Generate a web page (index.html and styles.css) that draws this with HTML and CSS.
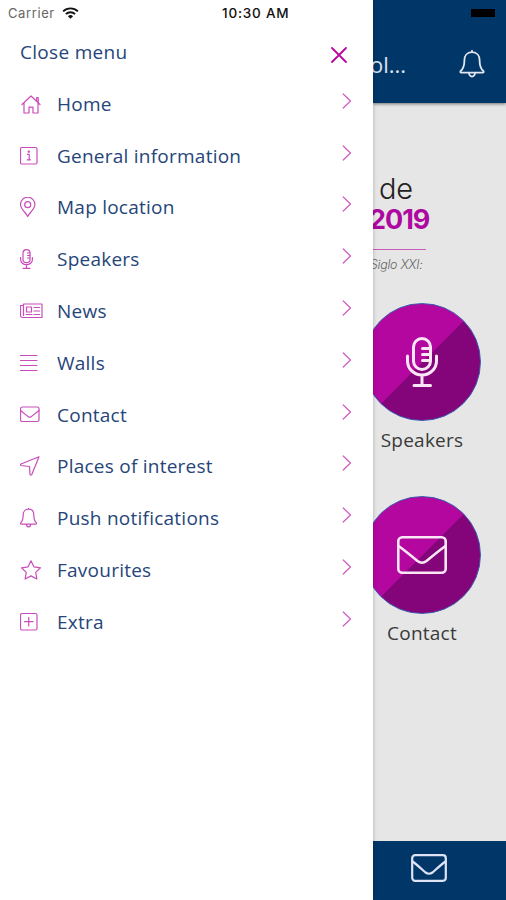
FILE: index.html
```html
<!DOCTYPE html>
<html lang="en">
<head>
  <meta charset="UTF-8" />
  <title>Menu</title>
  <link rel="stylesheet" href="styles.css">
</head>
<body>
  <div class="status-bar">
    <span class="carrier">Carrier</span>
    <svg class="wifi" viewBox="0 0 18 13"><path d="M1 4.8a11.5 11.5 0 0 1 16 0M4 7.8a7 7 0 0 1 10 0" /><path class="solid" d="M6.2 10a4 4 0 0 1 5.6 0L9 12.8z" /></svg>
    <span class="clock">10:30 AM</span>
    <span class="battery"></span>
  </div>

  <nav class="menu">
    <div class="menu-header">
      <span class="menu-title">Close menu</span>
      <svg class="close" viewBox="0 0 16 16"><path d="M1 1l14 14M15 1L1 15" /></svg>
    </div>
    <ul class="menu-list">
      <li class="item">
        <svg class="icon" viewBox="0 0 24 20"><path d="M2 10.500L11 2l9 8.500M4 9v10h5v-5.800h4V19h5V9M16.700 6.500V3.500h1.500v5" /></svg>
        <span class="label">Home</span>
        <svg class="arrow" viewBox="0 0 10 16"><path d="M1.2 1l7.3 7-7.3 7" /></svg>
      </li>
      <li class="item">
        <svg class="icon" viewBox="0 0 24 20"><rect x="0.5" y="1.5" width="16.5" height="16.5" rx="1.5" /><path d="M7.5 8.300h1.700v5.500M7.300 13.800h3.200M8.300 5h1v1.200h-1z" /></svg>
        <span class="label">General information</span>
        <svg class="arrow" viewBox="0 0 10 16"><path d="M1.2 1l7.3 7-7.3 7" /></svg>
      </li>
      <li class="item">
        <svg class="icon" viewBox="0 0 24 20"><path d="M7.7 19.4C6.3 16.2.5 12 .5 7.4a7.2 7.2 0 0 1 14.4 0c0 4.6-5.8 8.8-7.2 12z" /><circle cx="7.7" cy="7.7" r="3" /></svg>
        <span class="label">Map location</span>
        <svg class="arrow" viewBox="0 0 10 16"><path d="M1.2 1l7.3 7-7.3 7" /></svg>
      </li>
      <li class="item">
        <svg class="icon" viewBox="0 0 24 20"><rect x="3" y="0.7" width="7" height="13" rx="3.5" /><path d="M.6 8.500v2a5.900 5.200 0 0 0 11.800 0v-2M6.500 15.800v3.500M3 19.300h7M10 4H7.500M10 6.500H7.500M10 9H7.500" /></svg>
        <span class="label">Speakers</span>
        <svg class="arrow" viewBox="0 0 10 16"><path d="M1.2 1l7.3 7-7.3 7" /></svg>
      </li>
      <li class="item">
        <svg class="icon" viewBox="0 0 24 20"><path d="M3.500 3h18.500v13.500H2.500a2 2 0 0 1-2-2v-10h3M3.500 3v11.500M6.500 6h5v5h-5zM6 13.500h6M14 6.500h5.500M14 10h5.500M14 13.500h5.500" /></svg>
        <span class="label">News</span>
        <svg class="arrow" viewBox="0 0 10 16"><path d="M1.2 1l7.3 7-7.3 7" /></svg>
      </li>
      <li class="item">
        <svg class="icon" viewBox="0 0 24 20"><path d="M0 2.500h17M0 7.500h17M0 12.500h17M0 17.500h17" /></svg>
        <span class="label">Walls</span>
        <svg class="arrow" viewBox="0 0 10 16"><path d="M1.2 1l7.3 7-7.3 7" /></svg>
      </li>
      <li class="item">
        <svg class="icon" viewBox="0 0 24 20"><rect x="0.5" y="2" width="18.5" height="14.5" rx="1.8" /><path d="M.5 5.500c3 2.500 5 4 7.500 6q1.700 1.400 3.500 0c2.500-2 4.500-3.500 7.500-6" /></svg>
        <span class="label">Contact</span>
        <svg class="arrow" viewBox="0 0 10 16"><path d="M1.2 1l7.3 7-7.3 7" /></svg>
      </li>
      <li class="item">
        <svg class="icon" viewBox="0 0 24 20"><path d="M19 .8L11.800 18.500q-.8 1.400-1.800 0L9.500 10.500 1 9.500q-1-1 0-1.500z" /></svg>
        <span class="label">Places of interest</span>
        <svg class="arrow" viewBox="0 0 10 16"><path d="M1.2 1l7.3 7-7.3 7" /></svg>
      </li>
      <li class="item">
        <svg class="icon" viewBox="0 0 24 20"><path d="M8.500 1.200c-3.500 0-5.300 2.500-5.300 5.500 0 5-.9 6.500-2.400 8-.6.900-.2 1.500.5 1.500h14.400c.7 0 1.100-.6.500-1.500-1.500-1.500-2.400-3-2.400-8 0-3-1.800-5.500-5.300-5.500zM8.500 1.200V.5M6.500 16.500a2 2.300 0 0 0 4 0" /></svg>
        <span class="label">Push notifications</span>
        <svg class="arrow" viewBox="0 0 10 16"><path d="M1.2 1l7.3 7-7.3 7" /></svg>
      </li>
      <li class="item">
        <svg class="icon" viewBox="0 0 24 20"><path d="M11 .8l2.900 6 6.600 1-4.800 4.600 1.200 6.600-5.900-3.100L5.100 19l1.200-6.600L1.500 7.800l6.600-1z" /></svg>
        <span class="label">Favourites</span>
        <svg class="arrow" viewBox="0 0 10 16"><path d="M1.2 1l7.3 7-7.3 7" /></svg>
      </li>
      <li class="item">
        <svg class="icon" viewBox="0 0 24 20"><rect x="0.5" y="1.5" width="16.5" height="16.5" rx="1.5" /><path d="M4.500 9.700h8.500M8.750 5.500V14" /></svg>
        <span class="label">Extra</span>
        <svg class="arrow" viewBox="0 0 10 16"><path d="M1.2 1l7.3 7-7.3 7" /></svg>
      </li>
    </ul>
  </nav>

  <main class="page">
    <header class="page-header">
      <span class="page-title">ol...</span>
      <svg class="bell" viewBox="0 0 26 28"><path d="M13 2.200c-5 0-7.600 3.600-7.600 8 0 6.500-1.200 8.600-3.600 10.600-.9 1-.5 1.800.6 1.800h21.200c1.100 0 1.500-.8.600-1.800-2.400-2-3.600-4.100-3.600-10.600 0-4.400-2.600-8-7.600-8zM13 2.200V.8M10 22.800a3 3.700 0 0 0 6 0" /></svg>
    </header>
    <section class="content">
      <div class="banner">
        <div class="banner-top">de</div>
        <div class="banner-year">2019</div>
        <div class="banner-sub">Siglo XXI:</div>
      </div>
      <div class="tile">
        <div class="circle">
          <svg class="mic" viewBox="0 0 32 50"><rect x="7.5" y="1.5" width="17" height="31" rx="8.5" /><path d="M1.500 19v5a14.500 14 0 0 0 29 0v-5M16 38v10M8 48.500h16.500M24 11.500h-7.500M24 17.500h-7.500M24 23.500h-7.500" /></svg>
        </div>
        <div class="tile-label">Speakers</div>
      </div>
      <div class="tile">
        <div class="circle">
          <svg class="mail" viewBox="0 0 50 38"><rect x="1.3" y="1.3" width="47.4" height="35.4" rx="4" /><path d="M1.500 10c7 5 13 10 19 15q4.500 3.500 9 0c6-5 12-10 19-15" /></svg>
        </div>
        <div class="tile-label">Contact</div>
      </div>
    </section>
    <footer class="tab-bar">
      <svg class="tab-mail" viewBox="0 0 36 28"><rect x="1.2" y="1.2" width="33.6" height="25.6" rx="3" /><path d="M1.500 7.500c5 3.700 9 7.500 13 11q3.500 2.500 7 0c4-3.500 8-7.300 13-11" /></svg>
    </footer>
  </main>
</body>
</html>
```

FILE: styles.css
```css
* {
  box-sizing: border-box;
}

body {
  margin: 0;
  height: 900px;
  display: flex;
  overflow: hidden;
  background: #fff;
  font-family: 'Open Sans', sans-serif;
}

svg {
  flex: none;
  fill: none;
  stroke-linecap: round;
  stroke-linejoin: round;
}

/* lies over both the menu and the page */
.status-bar {
  position: absolute;
  top: 0;
  left: 0;
  width: 506px;
  height: 26px;
  padding: 0 11px 0 8px;
  display: grid;
  grid-template-columns: 54px 160px 1fr 24px;
  align-items: center;
  font-family: Inter, sans-serif;
  font-size: 13px;
  z-index: 3;
}

.carrier {
  color: #666;
  letter-spacing: 0.6px;
}

.wifi {
  width: 17px;
  height: 12px;
  stroke: #111;
  stroke-width: 2;
  stroke-linecap: butt;
}

.wifi .solid {
  fill: #111;
  stroke: none;
}

.clock {
  color: #111;
  font-size: 13.5px;
  font-weight: 500;
  letter-spacing: 0.8px;
  white-space: nowrap;
}

.battery {
  height: 8px;
  background: #000;
}

.menu {
  width: 373px;
  padding-top: 26px;
  background: #fff;
  color: #264579;
  font-size: 19px;
  letter-spacing: 0.24px;
  box-shadow: 0 0 4px rgba(0, 0, 0, 0.25);
  z-index: 2;
}

.menu-header {
  height: 52px;
  padding: 0 26px 0 20px;
  display: flex;
  justify-content: space-between;
  align-items: center;
}

.menu-title {
  margin-bottom: 1px;
  letter-spacing: 0.3px;
}

.close {
  width: 16px;
  height: 16px;
  margin-top: 5px;
  stroke: #b9089f;
  stroke-width: 1.8;
}

.menu-list {
  margin: 0;
  padding: 0;
  list-style: none;
}

.item {
  height: 51.8px;
  padding: 0 21px 0 20px;
  display: flex;
  align-items: center;
}

.icon {
  width: 24px;
  height: 20px;
  margin-right: 13px;
  stroke: #c94dba;
  stroke-width: 1.2;
}

.label {
  flex: 1;
}

.arrow {
  width: 10px;
  height: 16px;
  margin-bottom: 6px;
  stroke: #cf5bc2;
  stroke-width: 1.2;
}

.page {
  width: 133px;
  display: flex;
  flex-direction: column;
  overflow: hidden;
  background: #e6e6e6;
}

.page-header {
  height: 103px;
  padding: 25px 21px 0 0;
  display: flex;
  justify-content: space-between;
  align-items: center;
  background: #003768;
  box-shadow: 0 1px 3px rgba(0, 0, 0, 0.5);
  color: #dfe3f0;
}

.page-title {
  margin-left: -3px;
  font-size: 22px;
}

.bell {
  width: 26px;
  height: 28px;
  stroke: #e4e6f2;
  stroke-width: 1.8;
}

.content {
  flex: 1;
}

.banner {
  height: 200px;
  padding-top: 70px;
  font-family: Inter, sans-serif;
}

.banner-top {
  margin-left: 6px;
  font-size: 29px;
  font-weight: 300;
  line-height: 32px;
  letter-spacing: -0.3px;
  color: #222;
}

.banner-year {
  width: 57px;
  height: 44px;
  margin-left: -4px;
  font-size: 27px;
  font-weight: 700;
  line-height: 29px;
  letter-spacing: -1px;
  color: #ad08a0;
}

.banner-sub {
  width: 53px;
  border-top: 1px solid #c95bb9;
  padding-top: 7px;
  font-size: 12.5px;
  font-style: italic;
  font-weight: 300;
  line-height: 16px;
  letter-spacing: -0.3px;
  text-indent: -3px;
  white-space: nowrap;
  color: #666;
}

.tile {
  width: 118px;
  height: 193px;
  margin-left: -10px;
}

.circle {
  width: 118px;
  height: 118px;
  display: flex;
  justify-content: center;
  align-items: center;
  border: 1px solid #3c5cb0;
  border-radius: 50%;
  background: linear-gradient(135deg, #b3079f 50%, #840579 50.5%);
  stroke: #fbe6f6;
}

.mic {
  width: 32px;
  height: 50px;
  stroke-width: 3;
}

.mail {
  width: 50px;
  height: 38px;
  stroke-width: 2.6;
}

.tile-label {
  margin-top: 5px;
  font-size: 19px;
  line-height: 28px;
  letter-spacing: 0.24px;
  text-align: center;
  color: #3a3a3a;
}

.tab-bar {
  height: 59px;
  padding-left: 38px;
  display: flex;
  align-items: center;
  background: #003768;
}

.tab-mail {
  width: 36px;
  height: 28px;
  margin-bottom: 5px;
  stroke: #dfe3f4;
  stroke-width: 2.2;
}
```
